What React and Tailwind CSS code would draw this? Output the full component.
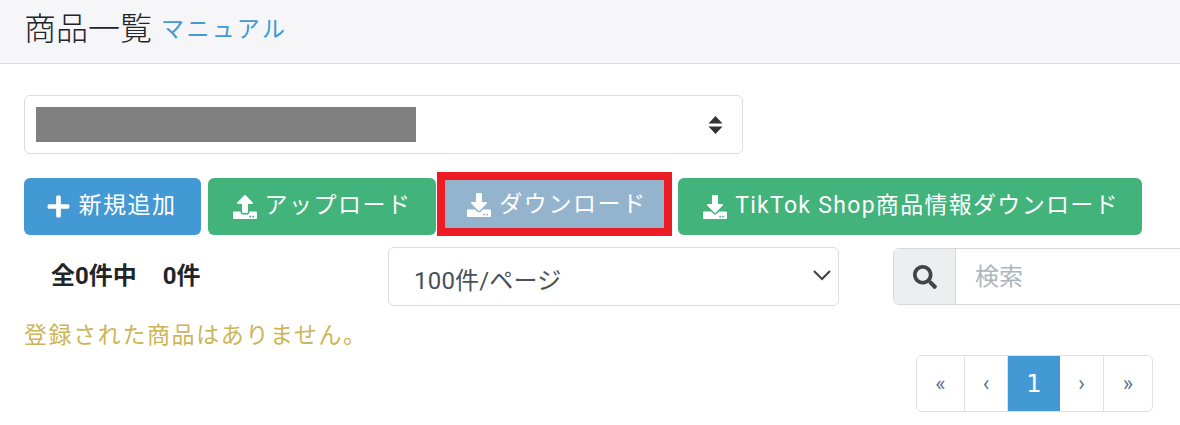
import React from 'react';
import { FaPlus, FaUpload, FaDownload, FaSearch } from 'react-icons/fa';

const FONT = "font-['Roboto','Noto_Sans_CJK_JP',sans-serif]";

function ActionButton({ icon, label, className }) {
  return (
    <button className={`flex h-[57px] items-center justify-center gap-[8px] rounded-[6px] text-[23px] text-white ${className}`}>
      {icon}
      <span>{label}</span>
    </button>
  );
}

function Pager() {
  const items = [
    { label: '«', w: 'w-[48px]' },
    { label: '‹', w: 'w-[43px]' },
    { label: '1', w: 'w-[52px]', active: true },
    { label: '›', w: 'w-[44px]' },
    { label: '»', w: 'w-[48px]' },
  ];
  return (
    <div className="flex h-[57px] overflow-hidden rounded-[6px] border border-[#dee2e6]">
      {items.map(({ label, w, active }, idx) => (
        <div
          key={idx}
          className={`flex items-center justify-center ${w} ${
            active
              ? "-my-px bg-[#4299d4] font-['DejaVu_Sans',sans-serif] text-[24px] text-white"
              : 'border-r border-[#dee2e6] text-[22px] text-[#5d7389] last:border-r-0'
          }`}
        >
          {label}
        </div>
      ))}
    </div>
  );
}

export default function App() {
  return (
    <div className={`h-[425px] w-[1180px] overflow-hidden bg-white ${FONT}`}>
      {/* header */}
      <div className="flex h-[64px] items-center border-b border-[#dcdcdf] bg-[#f6f6f9] pb-[6px] pl-6">
        <h1 className="text-[32px] leading-none text-[#212529] [font-weight:300]">商品一覧</h1>
        <a className="ml-[9px] mt-[1px] text-[23px] leading-none tracking-[2.4px] text-[#4299d4]">マニュアル</a>
      </div>

      <div className="px-6 pt-[31px]">
        {/* store select */}
        <div className="flex h-[59px] w-[719px] items-center justify-between rounded-[6px] border border-[#dcdcdc] pl-[11px] pr-[19px]">
          <div className="h-[35px] w-[380px] bg-[#808080]" />
          <svg width="15" height="20" viewBox="0 0 15 20" className="text-[#333]">
            <path d="M7.5 1 L14.5 8.5 H0.5 Z M7.5 19 L14.5 11.5 H0.5 Z" fill="currentColor" />
          </svg>
        </div>

        {/* actions */}
        <div className="mt-[24px] flex items-start">
          <ActionButton
            icon={<FaPlus className="size-[25px]" />}
            label="新規追加"
            className="w-[177px] bg-[#4299d4] pr-[3px] tracking-[1.5px]"
          />
          <ActionButton
            icon={<FaUpload className="size-[24px]" />}
            label="アップロード"
            className="ml-[7px] w-[228px] bg-[#41b37b] tracking-[1.5px]"
          />
          <div className="-mt-[6px] ml-px border-[8px] border-[#ed1c24]">
            <ActionButton
              icon={<FaDownload className="size-[24px]" />}
              label="ダウンロード"
              className="!h-[48px] w-[219px] !rounded-none bg-[#94b4ce] pl-[5px] pt-[2px] tracking-[1.6px]"
            />
          </div>
          <ActionButton
            icon={<FaDownload className="size-[24px]" />}
            label="TikTok Shop商品情報ダウンロード"
            className="ml-[6px] w-[464px] bg-[#41b37b] pl-[2px] tracking-[1.3px]"
          />
        </div>

        {/* list controls */}
        <div className="mt-[11px] flex items-start">
          <div className="w-[364px] shrink-0 pl-[27px] pt-[12px] text-[24px] font-bold leading-[34px] text-[#212529]">
            全0件中<span className="ml-[26px]">0件</span>
          </div>
          <div className="flex h-[59px] w-[451px] shrink-0 items-center justify-between rounded-[6px] border border-[#dcdcdc] pl-[25px] pr-[6px] text-[24px] tracking-[0.2px] text-[#495057]">
            <span className="mt-[8px]">100件/ページ</span>
            <svg width="20" height="12" viewBox="0 0 20 12" className="-mt-[3px]">
              <path d="M2 2 L10 10 L18 2" fill="none" stroke="#444" strokeWidth="2.2" />
            </svg>
          </div>
          <div className="ml-[54px] mt-px flex h-[57px] w-[340px] shrink-0 rounded-[6px] border border-[#d8d8d8]">
            <div className="flex w-[62px] items-center justify-center rounded-l-[6px] border-r border-[#d8d8d8] bg-[#eceef0]">
              <FaSearch className="size-[24px] text-[#444]" />
            </div>
            <span className="self-center pl-[19px] text-[24px] text-[#adb5bd]">検索</span>
          </div>
        </div>

        {/* empty message */}
        <p className="mt-[13px] text-[23px] leading-[34px] tracking-[1.6px] text-[#cdb558]">登録された商品はありません。</p>

        {/* pagination */}
        <div className="mt-[2px] flex pl-[892px]">
          <Pager />
        </div>
      </div>
    </div>
  );
}
